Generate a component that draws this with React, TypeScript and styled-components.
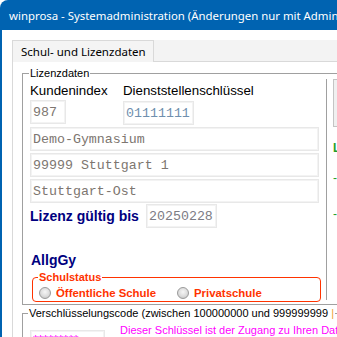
import styled, { createGlobalStyle } from "styled-components";

const GlobalStyle = createGlobalStyle`
  html, body {
    margin: 0;
    padding: 0;
    background: #ffffff;
    width: 337px;
    height: 337px;
    overflow: hidden;
  }
`;

const Window = styled.div`
  width: 337px;
  height: 337px;
  overflow: hidden;
  display: flex;
  flex-direction: column;
  background: #0063b1;
  border-top-left-radius: 8px;
`;

const TitleBar = styled.div`
  height: 30px;
  flex-shrink: 0;
  display: flex;
  align-items: center;
  padding-left: 9px;
  color: #ffffff;
  font-family: "Noto Sans", sans-serif;
  font-size: 11.4px;
  white-space: nowrap;
`;

const Client = styled.div`
  flex: 1;
  margin-left: 2px;
  background: #ffffff;
  padding: 10px 0 0 10px;
  display: flex;
  flex-direction: column;
  min-width: 600px;
`;

const TabStrip = styled.div`
  display: flex;
  height: 22px;
`;

const Tab = styled.div`
  width: 142px;
  box-sizing: border-box;
  border: 1px solid #d9d9d9;
  border-bottom: none;
  background: #f4f4f4;
  color: #000000;
  font-family: "Noto Sans", sans-serif;
  font-size: 11.5px;
  display: flex;
  align-items: center;
  padding-left: 8px;
  white-space: nowrap;
`;

const TabFiller = styled.div`
  flex: 1;
  background: #f3f3f3;
  border-bottom: 1px solid #d9d9d9;
`;

const TabPage = styled.div`
  flex: 1;
  border-left: 1px solid #d9d9d9;
  background: #ffffff;
  padding: 5px 0 0 9px;
`;

const Group = styled.fieldset<{ $color?: string; $radius?: number }>`
  margin: 0;
  padding: 0;
  min-width: 0;
  border: 1px solid ${({ $color }) => $color || "#a0a0a0"};
  border-radius: ${({ $radius }) => $radius || 0}px;
`;

const Legend = styled.legend<{ $color?: string; $bold?: boolean; $left?: number }>`
  margin-left: ${({ $left }) => $left ?? 6}px;
  padding: 0 1px;
  font-family: "Liberation Sans", Arial, sans-serif;
  font-size: 11px;
  line-height: 12px;
  font-weight: ${({ $bold }) => ($bold ? 700 : 400)};
  color: ${({ $color }) => $color || "#000000"};
  white-space: nowrap;
`;

const LizenzGroup = styled(Group)`
  width: 600px;
`;

const GroupBody = styled.div`
  display: flex;
`;

const LeftCol = styled.div`
  width: 303px;
  flex-shrink: 0;
  padding: 4px 0 2px 7px;
  box-sizing: border-box;
  display: flex;
  flex-direction: column;
`;

const Separator = styled.div`
  width: 1px;
  background: #a0a0a0;
  margin-bottom: 4px;
`;

const RightCol = styled.div`
  padding-left: 6px;
  display: flex;
  flex-direction: column;
`;

const LabelRow = styled.div`
  display: grid;
  grid-template-columns: 93px auto;
  height: 16px;
`;

const FieldLabel = styled.span`
  font-family: "Liberation Sans", Arial, sans-serif;
  font-size: 13.3px;
  line-height: 16px;
  color: #000000;
  white-space: nowrap;
`;

const InputRow = styled.div`
  display: grid;
  grid-template-columns: 93px auto;
  align-items: start;
  margin-top: 1px;
`;

const Box = styled.div<{ $w: number; $h?: number; $color?: string; $top?: number }>`
  width: ${({ $w }) => $w}px;
  height: ${({ $h }) => $h || 24}px;
  margin-top: ${({ $top }) => $top || 0}px;
  box-sizing: border-box;
  border: 1px solid #e8e8e8;
  box-shadow: inset 0 0 0 1px #f3f3f3;
  background: #ffffff;
  padding-left: 2px;
  display: flex;
  align-items: center;
  font-family: "Liberation Mono", "Courier New", monospace;
  font-size: 13.3px;
  color: ${({ $color }) => $color || "#7d7670"};
  white-space: nowrap;
  overflow: hidden;
`;

const LizenzRow = styled.div`
  display: flex;
  align-items: center;
  margin-top: 1px;
`;

const BoldLabel = styled.span<{ $w?: number }>`
  width: ${({ $w }) => ($w ? `${$w}px` : "auto")};
  font-family: "Liberation Sans", Arial, sans-serif;
  font-size: 14px;
  line-height: 16px;
  font-weight: 700;
  color: #000080;
  white-space: nowrap;
`;

const SchoolType = styled(BoldLabel)`
  margin-top: 24px;
  padding-left: 1px;
`;

const StatusGroup = styled(Group)`
  width: 289px;
  margin: 3px 0 0 2px;
  box-sizing: border-box;
`;

const RadioRow = styled.div`
  display: flex;
  align-items: center;
  height: 14px;
  padding: 3px 0 1px 6px;
`;

const RadioItem = styled.label<{ $w?: number }>`
  display: flex;
  align-items: center;
  gap: 5px;
  width: ${({ $w }) => ($w ? `${$w}px` : "auto")};
  font-family: "Liberation Sans", Arial, sans-serif;
  font-size: 11.4px;
  font-weight: 700;
  color: #ff3300;
  white-space: nowrap;
`;

const RadioDot = styled.span`
  width: 12px;
  height: 12px;
  box-sizing: border-box;
  border-radius: 50%;
  border: 1px solid #9a9a9a;
  background: radial-gradient(circle at 50% 40%, #f6f6f6 0%, #dcdcdc 55%, #b9b9b9 100%);
  flex-shrink: 0;
`;

const SidePanel = styled.div`
  width: 100px;
  height: 48px;
  box-sizing: border-box;
  border: 1px solid #c4c4c4;
  background: #f0f0f0;
`;

const GreenText = styled.span<{ $top: number; $bold?: boolean }>`
  margin-top: ${({ $top }) => $top}px;
  font-family: "Liberation Sans", Arial, sans-serif;
  font-size: 12px;
  line-height: 14px;
  font-weight: ${({ $bold }) => ($bold ? 700 : 400)};
  color: #1f9e2a;
  white-space: nowrap;
`;

const CodeGroup = styled(Group)`
  width: 600px;
  margin-top: 2px;
`;

const CodeRow = styled.div`
  display: flex;
  align-items: flex-start;
  padding-left: 7px;
`;

const Stars = styled(Box)`
  font-family: "Liberation Sans", Arial, sans-serif;
  font-size: 13px;
  color: #ff00ff;
  align-items: flex-start;
  padding-top: 1px;
`;

const Hint = styled.span`
  margin: 5px 0 0 15px;
  font-family: "Liberation Sans", Arial, sans-serif;
  font-size: 11px;
  line-height: 13px;
  color: #ff00ff;
  white-space: nowrap;
`;

const Pipe = styled.span`
  color: #f0a030;
`;

export default function App() {
  return (
    <>
      <GlobalStyle />
      <Window>
        <TitleBar>winprosa - Systemadministration (Änderungen nur mit Administratorrechten)</TitleBar>
        <Client>
          <TabStrip>
            <Tab>Schul- und Lizenzdaten</Tab>
            <TabFiller />
          </TabStrip>
          <TabPage>
            <LizenzGroup>
              <Legend>Lizenzdaten</Legend>
              <GroupBody>
                <LeftCol>
                  <LabelRow>
                    <FieldLabel>Kundenindex</FieldLabel>
                    <FieldLabel>Dienststellenschlüssel</FieldLabel>
                  </LabelRow>
                  <InputRow>
                    <Box $w={36}>987</Box>
                    <Box $w={71} $top={1} $color="#6f8fae">01111111</Box>
                  </InputRow>
                  <Box $w={289} $top={2}>Demo-Gymnasium</Box>
                  <Box $w={289} $top={2}>99999 Stuttgart 1</Box>
                  <Box $w={289} $top={2}>Stuttgart-Ost</Box>
                  <LizenzRow>
                    <BoldLabel $w={116}>Lizenz gültig bis</BoldLabel>
                    <Box $w={71} $color="#7c7c84">20250228</Box>
                  </LizenzRow>
                  <SchoolType>AllgGy</SchoolType>
                  <StatusGroup $color="#ff3300" $radius={4}>
                    <Legend $color="#ff3300" $bold $left={5}>Schulstatus</Legend>
                    <RadioRow>
                      <RadioItem $w={138}>
                        <RadioDot />
                        Öffentliche Schule
                      </RadioItem>
                      <RadioItem>
                        <RadioDot />
                        Privatschule
                      </RadioItem>
                    </RadioRow>
                  </StatusGroup>
                </LeftCol>
                <Separator />
                <RightCol>
                  <SidePanel />
                  <GreenText $top={14} $bold>
                    Lizenzierte Module
                  </GreenText>
                  <GreenText $top={16}>- Stundenplan</GreenText>
                  <GreenText $top={22}>- Vertretungsplan</GreenText>
                </RightCol>
              </GroupBody>
            </LizenzGroup>
            <CodeGroup>
              <Legend $left={5}>
                Verschlüsselungscode (zwischen 100000000 und 999999999 <Pipe>|</Pipe>
              </Legend>
              <CodeRow>
                <Stars $w={75} $h={22} $top={11}>
                  *********
                </Stars>
                <Hint>Dieser Schlüssel ist der Zugang zu Ihren Daten</Hint>
              </CodeRow>
            </CodeGroup>
          </TabPage>
        </Client>
      </Window>
    </>
  );
}
